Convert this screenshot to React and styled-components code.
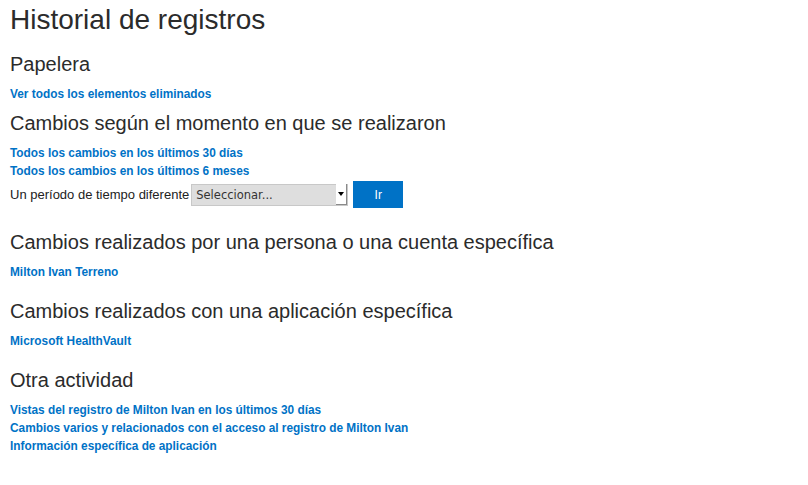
import React from "react";
import styled, { createGlobalStyle } from "styled-components";

const GlobalStyle = createGlobalStyle`
  html, body {
    margin: 0;
    padding: 0;
    background: #ffffff;
  }
  body {
    font-family: "Liberation Sans", Arial, sans-serif;
    color: #333333;
  }
`;

const Page = styled.div`
  padding: 4px 10px 20px;
  width: 808px;
  box-sizing: border-box;
`;

const Title = styled.h1`
  margin: 0;
  font-size: 28px;
  line-height: 32px;
  font-weight: normal;
  color: #2b2b2b;
`;

const Section = styled.section`
  margin-top: ${(p) => p.$top}px;
`;

const SectionTitle = styled.h2`
  margin: 0 0 9px;
  font-size: 20px;
  line-height: 24px;
  font-weight: normal;
  color: #2b2b2b;
`;

const LinkList = styled.div`
  display: flex;
  flex-direction: column;
`;

const Link = styled.a`
  display: block;
  width: fit-content;
  font-size: 11.85px;
  line-height: 18px;
  font-weight: bold;
  color: #0072c6;
  text-decoration: none;
  cursor: pointer;
`;

const PeriodRow = styled.div`
  display: flex;
  align-items: center;
  margin-top: 1px;
  height: 27px;
  font-size: 13px;
`;

const PeriodLabel = styled.span`
  color: #222222;
  margin-right: 2px;
`;

const SelectWrap = styled.div`
  position: relative;
  width: 157px;
  height: 22px;
`;

const Select = styled.select`
  appearance: none;
  -webkit-appearance: none;
  width: 100%;
  height: 100%;
  margin: 0;
  padding: 0 0 0 4px;
  box-sizing: border-box;
  border: 1px solid #c8c8c8;
  border-radius: 0;
  background: #dedede;
  color: #333333;
  font-family: "DejaVu Sans", sans-serif;
  font-size: 11.5px;
  outline: none;
`;

const Arrow = styled.span`
  position: absolute;
  top: 0;
  right: 1px;
  width: 11px;
  height: 21px;
  box-sizing: border-box;
  background: #ffffff;
  border-right: 1px solid #8a8a8a;
  border-bottom: 1px solid #8a8a8a;
  display: flex;
  align-items: center;
  justify-content: center;
  pointer-events: none;

  &::after {
    content: "";
    border-left: 3px solid transparent;
    border-right: 3px solid transparent;
    border-top: 4px solid #000000;
  }
`;

const GoButton = styled.button`
  margin-left: 5px;
  width: 50px;
  height: 27px;
  border: none;
  background: #0072c6;
  color: #ffffff;
  font-family: "Liberation Sans", Arial, sans-serif;
  font-size: 12px;
  cursor: pointer;
`;

const sections = [
  {
    title: "Cambios realizados por una persona o una cuenta específica",
    top: 22,
    links: ["Milton Ivan Terreno"],
  },
  {
    title: "Cambios realizados con una aplicación específica",
    top: 18,
    links: ["Microsoft HealthVault"],
  },
  {
    title: "Otra actividad",
    top: 18,
    links: [
      "Vistas del registro de Milton Ivan en los últimos 30 días",
      "Cambios varios y relacionados con el acceso al registro de Milton Ivan",
      "Información específica de aplicación",
    ],
  },
];

function App() {
  return (
    <>
      <GlobalStyle />
      <Page>
        <Title>Historial de registros</Title>

        <Section $top={16}>
          <SectionTitle>Papelera</SectionTitle>
          <LinkList>
            <Link>Ver todos los elementos eliminados</Link>
          </LinkList>
        </Section>

        <Section $top={8}>
          <SectionTitle>Cambios según el momento en que se realizaron</SectionTitle>
          <LinkList>
            <Link>Todos los cambios en los últimos 30 días</Link>
            <Link>Todos los cambios en los últimos 6 meses</Link>
          </LinkList>
          <PeriodRow>
            <PeriodLabel>Un período de tiempo diferente</PeriodLabel>
            <SelectWrap>
              <Select defaultValue="">
                <option value="">Seleccionar...</option>
              </Select>
              <Arrow />
            </SelectWrap>
            <GoButton>Ir</GoButton>
          </PeriodRow>
        </Section>

        {sections.map((s) => (
          <Section key={s.title} $top={s.top}>
            <SectionTitle>{s.title}</SectionTitle>
            <LinkList>
              {s.links.map((l) => (
                <Link key={l}>{l}</Link>
              ))}
            </LinkList>
          </Section>
        ))}
      </Page>
    </>
  );
}

export default App;
